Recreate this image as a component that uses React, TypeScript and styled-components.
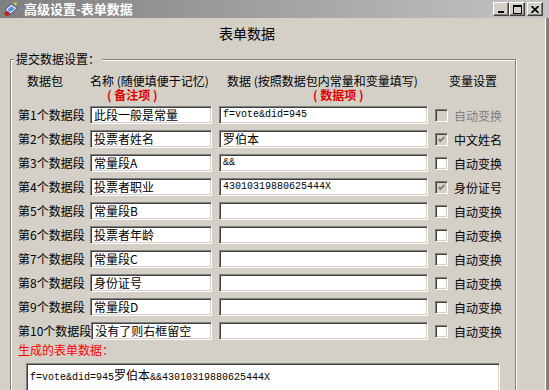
import React from 'react';
import styled, { createGlobalStyle, css } from 'styled-components';

const GlobalStyle = createGlobalStyle`
  html, body {
    margin: 0;
    padding: 0;
    background: #d4d0c8;
  }
  body {
    font-family: "Noto Sans CJK SC", "Liberation Sans", sans-serif;
    font-size: 12px;
    color: #000;
  }
`;

const sunken = css`
  box-sizing: border-box;
  background: #fff;
  border: 1px solid;
  border-color: #808080 #ffffff #ffffff #808080;
  box-shadow: inset 1px 1px #404040, inset -1px -1px #d4d0c8;
`;

// label | name (gives way when a label runs long) | data with its 7px lead | option
const columns = css`
  display: grid;
  grid-template-columns: minmax(72px, max-content) minmax(0, 1fr) 216px 87px;
  align-items: center;
`;

const Window = styled.div`
  width: 549px;
  height: 390px;
  overflow: hidden;
  display: flex;
  flex-direction: column;
  background: #d4d0c8;
`;

const TitleBar = styled.div`
  flex: none;
  height: 18px;
  display: flex;
  align-items: center;
  gap: 5px;
  padding: 0 6px 0 3px;
  background: linear-gradient(to right, #808080, #c4c4c4);
`;

const TitleText = styled.div`
  flex: 1;
  color: #fff;
  font-size: 13px;
  font-weight: 700;
  line-height: 18px;
  white-space: nowrap;
`;

const Controls = styled.div`
  display: flex;
  align-items: center;
`;

const CtrlButton = styled.div<{ $gap?: number }>`
  box-sizing: border-box;
  width: 16px;
  height: 14px;
  margin-left: ${({ $gap }) => $gap ?? 0}px;
  display: flex;
  align-items: center;
  justify-content: center;
  background: #d4d0c8;
  border: 1px solid;
  border-color: #ffffff #404040 #404040 #ffffff;
  box-shadow: inset -1px -1px #808080;
`;

const Body = styled.div`
  flex: 1;
  min-height: 0;
  padding-left: 10px;
  box-shadow: inset -3px 0 #808080, inset -4px 0 #ffffff;
`;

const Heading = styled.div`
  margin: 7px 0 0 209px;
  font-size: 14px;
  line-height: 16px;
  white-space: nowrap;
`;

const Group = styled.fieldset`
  box-sizing: border-box;
  width: 506px;
  min-width: 0;
  margin: 10px 0 0;
  padding: 7px 0 10px 7px;
  border: 1px solid #808080;
  box-shadow: inset 1px 1px #ffffff, 1px 1px #ffffff;
`;

const Legend = styled.legend`
  margin-left: -4px;
  padding: 0 2px;
  font-size: 12px;
  line-height: 16px;
  background: #d4d0c8;
`;

const HeaderRow = styled.div`
  ${columns};
  line-height: 14px;
  white-space: nowrap;
`;

const HeaderCell = styled.div<{ $indent: number; $red?: boolean }>`
  padding-left: ${({ $indent }) => $indent}px;
  color: ${({ $red }) => ($red ? '#e00000' : '#000')};
  font-weight: ${({ $red }) => ($red ? 700 : 400)};
`;

const Rows = styled.div`
  display: flex;
  flex-direction: column;
  gap: 6px;
  margin-top: 4px;
`;

const Row = styled.div`
  ${columns};
  height: 18px;
`;

const RowLabel = styled.div`
  white-space: nowrap;
  line-height: 16px;
`;

const TextBox = styled.div`
  ${sunken};
  height: 18px;
  padding-left: 3px;
  display: flex;
  align-items: center;
  white-space: nowrap;
  overflow: hidden;
  line-height: 16px;
`;

const DataBox = styled(TextBox)`
  margin-left: 7px;
`;

const Mono = styled.span`
  font-family: "Liberation Mono", monospace;
  font-size: 10px;
`;

const Option = styled.label<{ $disabled?: boolean }>`
  display: flex;
  align-items: center;
  gap: 6px;
  margin-left: 7px;
  color: ${({ $disabled }) => ($disabled ? '#808080' : '#000')};
  white-space: nowrap;
`;

const Box = styled.span<{ $grey?: boolean }>`
  ${sunken};
  width: 13px;
  height: 13px;
  display: flex;
  align-items: center;
  justify-content: center;
  background: ${({ $grey }) => ($grey ? '#d4d0c8' : '#fff')};
`;

const ResultLabel = styled.div`
  margin-top: 2px;
  color: #ff0000;
  line-height: 16px;
`;

const Output = styled.div`
  ${sunken};
  width: 474px;
  height: 44px;
  margin: 5px 0 0 8px;
  padding: 3px 3px;
  line-height: 16px;
  white-space: nowrap;
`;

type Field = {
  name: string;
  data: string;
  option: string;
  checked?: boolean;
  disabled?: boolean;
};

const fields: Field[] = [
  { name: '此段一般是常量', data: 'f=vote&did=945', option: '自动变换', disabled: true },
  { name: '投票者姓名', data: '罗伯本', option: '中文姓名', checked: true },
  { name: '常量段A', data: '&&', option: '自动变换' },
  { name: '投票者职业', data: '43010319880625444X', option: '身份证号', checked: true },
  { name: '常量段B', data: '', option: '自动变换' },
  { name: '投票者年龄', data: '', option: '自动变换' },
  { name: '常量段C', data: '', option: '自动变换' },
  { name: '身份证号', data: '', option: '自动变换' },
  { name: '常量段D', data: '', option: '自动变换' },
  { name: '没有了则右框留空', data: '', option: '自动变换' },
];

const CJK = /([\u3000-\u9fff\uff00-\uffef]+)/;

function Mixed({ text }: { text: string }) {
  return (
    <>
      {text
        .split(CJK)
        .filter(Boolean)
        .map((part, i) =>
          CJK.test(part) ? <span key={i}>{part}</span> : <Mono key={i}>{part}</Mono>,
        )}
    </>
  );
}

function AppIcon() {
  return (
    <svg width="16" height="16" viewBox="0 0 16 16">
      <path d="M2 9 L8 3 L14 7 L8 13 Z" fill="#e8eef8" stroke="#3a5aa0" strokeWidth="1" />
      <path d="M4 9 L8 5 L12 7.5 L8 11 Z" fill="#6d8fd0" />
      <path d="M1 12 L5 10 L7 14 L3 15 Z" fill="#c02020" />
      <path d="M10 2 L14 1 L13 5 Z" fill="#f0c040" />
    </svg>
  );
}

function Check({ colour }: { colour: string }) {
  return (
    <svg width="7" height="7" viewBox="0 0 7 7">
      <path d="M0.5 3 L2.5 5 L6.5 1" fill="none" stroke={colour} strokeWidth="1.8" />
    </svg>
  );
}

export default function App() {
  return (
    <>
      <GlobalStyle />
      <Window>
        <TitleBar>
          <AppIcon />
          <TitleText>高级设置-表单数据</TitleText>
          <Controls>
            <CtrlButton>
              <svg width="8" height="8" viewBox="0 0 8 8">
                <rect x="1" y="6" width="6" height="2" fill="#000" />
              </svg>
            </CtrlButton>
            <CtrlButton>
              <svg width="9" height="9" viewBox="0 0 9 9">
                <rect x="0.5" y="0.5" width="8" height="8" fill="none" stroke="#000" />
                <rect x="0" y="0" width="9" height="2" fill="#000" />
              </svg>
            </CtrlButton>
            <CtrlButton $gap={2}>
              <svg width="8" height="7" viewBox="0 0 8 7">
                <path d="M0.5 0 L7.5 7 M7.5 0 L0.5 7" stroke="#000" strokeWidth="1.6" />
              </svg>
            </CtrlButton>
          </Controls>
        </TitleBar>

        <Body>
          <Heading>表单数据</Heading>

          <Group>
            <Legend>提交数据设置：</Legend>

            <HeaderRow>
              <HeaderCell $indent={9}>数据包</HeaderCell>
              <HeaderCell $indent={0}>名称 (随便填便于记忆)</HeaderCell>
              <HeaderCell $indent={15}>数据 (按照数据包内常量和变量填写)</HeaderCell>
              <HeaderCell $indent={21}>变量设置</HeaderCell>
            </HeaderRow>
            <HeaderRow>
              <span />
              <HeaderCell $indent={17} $red>( 备注项 )</HeaderCell>
              <HeaderCell $indent={101} $red>( 数据项 )</HeaderCell>
              <span />
            </HeaderRow>

            <Rows>
              {fields.map((f, i) => (
                <Row key={i}>
                  <RowLabel>第{i + 1}个数据段</RowLabel>
                  <TextBox>{f.name}</TextBox>
                  <DataBox>
                    <Mixed text={f.data} />
                  </DataBox>
                  <Option $disabled={f.disabled}>
                    <Box $grey={f.disabled || f.checked}>
                      {f.checked && <Check colour="#808080" />}
                    </Box>
                    {f.option}
                  </Option>
                </Row>
              ))}
            </Rows>

            <ResultLabel>生成的表单数据：</ResultLabel>
            <Output>
              <Mixed text="f=vote&did=945罗伯本&&43010319880625444X" />
            </Output>
          </Group>
        </Body>
      </Window>
    </>
  );
}
